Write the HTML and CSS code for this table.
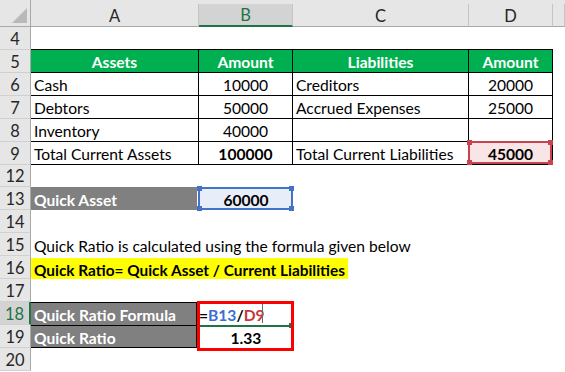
FILE: index.html
```html
<!DOCTYPE html>
<html>
<head>
<meta charset="utf-8">
<link rel="stylesheet" href="styles.css">
</head>
<body>
<div class="sheet">
  <div class="row hdr">
    <div class="corner"><svg width="30" height="26" viewBox="0 0 30 26"><polygon points="27,8 27,23 12,23" fill="#b9b9b9"/></svg></div>
    <div class="ch">A</div>
    <div class="ch active">B</div>
    <div class="ch">C</div>
    <div class="ch">D</div>
    <div class="ch"></div>
  </div>
  <div class="row">
    <div class="rh">4</div>
    <div class="c tt"></div><div class="c tt"></div><div class="c tt"></div><div class="c tt"></div><div class="c"></div>
  </div>
  <div class="row">
    <div class="rh">5</div>
    <div class="c t g">Assets</div><div class="c t g">Amount</div><div class="c t g">Liabilities</div><div class="c t g">Amount</div><div class="c"></div>
  </div>
  <div class="row">
    <div class="rh">6</div>
    <div class="c t">Cash</div><div class="c t ctr">10000</div><div class="c t">Creditors</div><div class="c t ctr">20000</div><div class="c"></div>
  </div>
  <div class="row">
    <div class="rh">7</div>
    <div class="c t">Debtors</div><div class="c t ctr">50000</div><div class="c t">Accrued Expenses</div><div class="c t ctr">25000</div><div class="c"></div>
  </div>
  <div class="row">
    <div class="rh">8</div>
    <div class="c t">Inventory</div><div class="c t ctr">40000</div><div class="c t"></div><div class="c t"></div><div class="c"></div>
  </div>
  <div class="row">
    <div class="rh">9</div>
    <div class="c t">Total Current Assets</div><div class="c t ctr b">100000</div><div class="c t">Total Current Liabilities</div>
    <div class="c t ctr b refcell red"><span class="ref"><i class="hd tl"></i><i class="hd tr"></i><i class="hd bl"></i><i class="hd br"></i></span><span class="txt">45000</span></div>
    <div class="c"></div>
  </div>
  <div class="row short">
    <div class="rh">12</div>
    <div class="c"></div><div class="c"></div><div class="c"></div><div class="c"></div><div class="c"></div>
  </div>
  <div class="row">
    <div class="rh">13</div>
    <div class="c gray qa">Quick Asset</div>
    <div class="c ctr b refcell blue"><span class="ref"><i class="hd tl"></i><i class="hd tr"></i><i class="hd bl"></i><i class="hd br"></i></span><span class="txt">60000</span></div>
    <div class="c"></div><div class="c"></div><div class="c"></div>
  </div>
  <div class="row">
    <div class="rh">14</div>
    <div class="c"></div><div class="c"></div><div class="c"></div><div class="c"></div><div class="c"></div>
  </div>
  <div class="row">
    <div class="rh">15</div>
    <div class="c">Quick Ratio is calculated using the formula given below</div><div class="c"></div><div class="c"></div><div class="c"></div><div class="c"></div>
  </div>
  <div class="row">
    <div class="rh">16</div>
    <div class="c hl"><span class="yellow">Quick Ratio= Quick Asset / Current Liabilities</span></div><div class="c"></div><div class="c"></div><div class="c"></div><div class="c"></div>
  </div>
  <div class="row">
    <div class="rh">17</div>
    <div class="c"></div><div class="c"></div><div class="c"></div><div class="c"></div><div class="c"></div>
  </div>
  <div class="row">
    <div class="rh sel">18</div>
    <div class="c gray boxed top">Quick Ratio Formula</div>
    <div class="c b edit"><span class="f-eq">=</span><span class="f-b">B13</span><span class="f-eq">/</span><span class="f-d">D9</span><i class="caret"></i><i class="active-line"></i><i class="fill-handle"></i><span class="redbox"></span></div>
    <div class="c"></div><div class="c"></div><div class="c"></div>
  </div>
  <div class="row">
    <div class="rh">19</div>
    <div class="c gray boxed top bot">Quick Ratio</div>
    <div class="c ctr b">1.33</div>
    <div class="c"></div><div class="c"></div><div class="c"></div>
  </div>
  <div class="row">
    <div class="rh">20</div>
    <div class="c"></div><div class="c"></div><div class="c"></div><div class="c"></div><div class="c"></div>
  </div>
</div>
</body>
</html>
```
FILE: styles.css
```css
html, body {
  margin: 0;
  background: #ffffff;
}
body {
  font-family: Lato, "Liberation Sans", sans-serif;
  font-size: 15.6px;
  color: #000;
}
.sheet {
  width: 565px;
  height: 372px;
  overflow: hidden;
  position: relative;
  background: #fff;
}
.row {
  display: grid;
  grid-template-columns: 31px 168px 94px 176px 84px 12px;
  height: 23px;
}
.row.short { height: 22px; }
.row.hdr {
  height: 27px;
  background: #e6e6e6;
}
.corner {
  box-sizing: border-box;
  border-right: 1px solid #a9a9a9;
  border-bottom: 1px solid #a9a9a9;
  height: 27px;
}
.corner svg { display: block; }
.ch {
  box-sizing: border-box;
  margin-top: 4px;
  border-right: 1px solid #c4c4c4;
  border-bottom: 1px solid #a9a9a9;
  display: flex;
  align-items: center;
  justify-content: center;
  color: #262626;
  font-size: 16.5px;
  padding-top: 1px;
}
.ch.active {
  background: #d3d3d3;
  color: #217346;
  border-bottom: 2px solid #217346;
}
.rh {
  box-sizing: border-box;
  background: #e6e6e6;
  border-right: 1px solid #a9a9a9;
  border-bottom: 1px solid #d0d0d0;
  display: flex;
  align-items: center;
  justify-content: center;
  color: #262626;
  font-size: 16.5px;
  padding-top: 1px;
}
.rh.sel {
  background: #d3d3d3;
  color: #217346;
  border-right: 2px solid #217346;
}
.c {
  box-sizing: border-box;
  display: flex;
  align-items: center;
  padding: 2px 3px 0;
  white-space: nowrap;
  min-width: 0;
  position: relative;
}
.tt { border-bottom: 1px solid #000; }
.t {
  border-right: 1px solid #000;
  border-bottom: 1px solid #000;
}
.g {
  background: #00b050;
  color: #fff;
  font-weight: bold;
  font-size: 15.6px;
  justify-content: center;
}
.ctr { justify-content: center; }
.b { font-weight: bold; font-size: 15.6px; }
.gray {
  background: #808080;
  color: #fff;
  font-weight: bold;
  font-size: 15.6px;
  margin-right: 2px;
}
.boxed {
  border-right: 1px solid #000;
}
.boxed.top { border-top: 1px solid #000; }
.boxed.bot { border-bottom: 1px solid #000; }
.hl { padding-left: 0; }
.yellow {
  background: #ffff00;
  font-weight: bold;
  font-size: 15.4px;
  align-self: stretch;
  display: flex;
  align-items: center;
  padding: 2px 3px 0;
  width: 317px;
  box-sizing: border-box;
}
.refcell .txt { position: relative; z-index: 1; }
.refcell.blue { background: #e8eef9; }
.refcell.red { background: #f9e5e5; }
.ref {
  position: absolute;
  left: -1px;
  top: 0;
  right: 0;
  bottom: 0;
  border: 2px solid #4472c4;
  box-sizing: border-box;
}
.refcell.red .ref {
  top: -1px;
  border-color: #c9434f;
}
.hd {
  position: absolute;
  width: 5px;
  height: 5px;
  background: #4472c4;
}
.refcell.red .hd { background: #c9434f; }
.hd.tl { left: -3px; top: -3px; }
.hd.tr { right: -3px; top: -3px; }
.hd.bl { left: -3px; bottom: -3px; }
.hd.br { right: -3px; bottom: -3px; }
.edit { padding-left: 0; }
.f-eq { color: #000; }
.f-b { color: #3b6fd4; }
.f-d { color: #c8363d; }
.caret {
  position: absolute;
  left: 63px;
  top: 2px;
  width: 1px;
  height: 19px;
  background: #6b6b6b;
}
.active-line {
  position: absolute;
  left: -1px;
  top: 23px;
  width: 92px;
  height: 2px;
  background: #217346;
}
.fill-handle {
  position: absolute;
  left: 90px;
  top: 21px;
  width: 4px;
  height: 5px;
  background: #217346;
}
.redbox {
  position: absolute;
  left: -2px;
  top: -1px;
  width: 97px;
  height: 50px;
  box-sizing: border-box;
  border: 3px solid #ff0000;
  z-index: 3;
}
```
